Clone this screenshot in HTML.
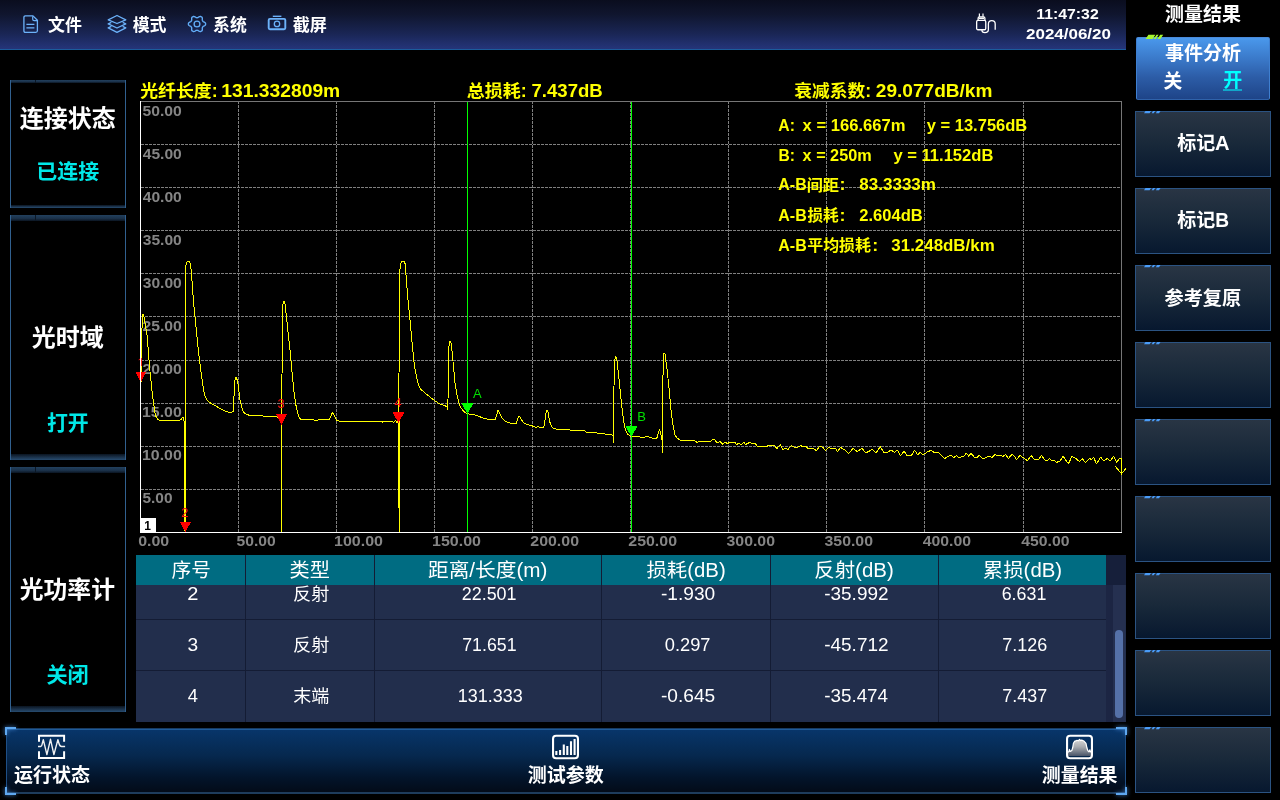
<!DOCTYPE html>
<html lang="zh-CN">
<head>
<meta charset="utf-8">
<title>OTDR</title>
<style>
*{box-sizing:border-box;margin:0;padding:0}
html,body{width:1280px;height:800px;overflow:hidden;background:#000}
body{position:relative;font-family:"Liberation Sans","Noto Sans CJK SC",sans-serif;color:#fff}
svg{overflow:visible}
/* top bar */
#topbar{position:absolute;left:0;top:0;width:1126px;height:50px;background:linear-gradient(180deg,#0a0d1e 0%,#10162f 30%,#1a2656 70%,#25357a 100%);border-bottom:1px solid #1c5c9c}
.ticon{position:absolute}
/* right panel buttons */
.rbtn{position:absolute;left:1135px;width:136px;height:66px;border:1px solid #2b5382;background:linear-gradient(180deg,#293544 0%,#19293a 48%,#07182f 100%)}
.rbtn.on{border-radius:2px;left:1136px;width:134px;background:linear-gradient(180deg,#4a98ec 0%,#3a78c8 35%,#2c5ca6 65%,#1e4488 100%);border-color:#4a8ada #3f7fd0 #2f62aa #3f7fd0}
#ticks{position:absolute;left:0;top:0}
/* left boxes */
.lbox{position:absolute;left:10px;width:116px;border-left:1px solid #31608f;border-right:1px solid #31608f}
.lbox:before,.lbox:after{content:"";position:absolute;left:0;right:0}
.lbox:before{top:0;height:6px;background:linear-gradient(180deg,#22405e,#1a3048 60%,#0a1420)}
.lbox:after{bottom:0;height:6px;background:linear-gradient(180deg,#0a1420,#1a3048 50%,#274c70)}
.lbox.s:before,.lbox.s:after{height:3px}
.lbox u{position:absolute;left:24px;top:0;width:1px;height:6px;background:#0c1826;z-index:2}
.lbox.s u{height:3px}
/* bottom bar */
#bbar{position:absolute;left:6px;top:728px;width:1120px;height:66px;border-left:1px solid #1f4f86;border-right:1px solid #1f4f86;background:linear-gradient(#183b62,#183b62) 0 0/100% 1px no-repeat,linear-gradient(#1f5a98,#1f5a98) 0 1px/100% 1px no-repeat,linear-gradient(#1e3c5c,#1e3c5c) 0 100%/100% 2px no-repeat,linear-gradient(180deg,#08366c 0%,#06284e 42%,#03142a 76%,#030a16 100%)}
.corner{position:absolute;width:11px;height:8px;border:2px solid #5fa8f0;filter:drop-shadow(0 0 2px #4a90e0)}
/* chart */
#chart{position:absolute;left:0;top:0;will-change:transform;font-family:"Liberation Sans","Noto Sans CJK SC",sans-serif}
#chart .mk{font:400 13px "Liberation Sans",sans-serif;fill:#00e000}
#chart .rk{font:400 13px "Liberation Sans",sans-serif;fill:#ff1010}
/* table */
#tbl{position:absolute;left:136px;top:554.5px;width:990px;height:167.3px;background:#222e4c;overflow:hidden}
#tbl .hd{position:absolute;left:0;top:0;width:970px;height:30.5px;background:#006c82}
#tbl .vl{position:absolute;top:0;width:1px;height:168px;background:#141c34}
#tbl .hl{position:absolute;left:0;width:970px;height:1px;background:#141c34}
#tbl .sb1{position:absolute;left:970px;top:0;width:20px;height:30.5px;background:#161f3a}
#tbl .sb2{position:absolute;left:970px;top:30.5px;width:7px;height:137px;background:#1c2543}
#tbl .sb3{position:absolute;left:977px;top:30.5px;width:12px;height:137px;background:#253050}
#tbl .thumb{position:absolute;left:979px;top:75.5px;width:8px;height:88px;border-radius:4px;background:#5571a8}
/* text overlay */
#txt{position:absolute;left:0;top:0;will-change:transform;font-family:"Liberation Sans","Noto Sans CJK SC",sans-serif}

</style>
</head>
<body>
<div id="topbar"><svg class="ticon" style="left:22px;top:14px" width="18" height="20" viewBox="0 0 18 20"><g fill="none" stroke="#6cb2fa" stroke-width="1.3" stroke-linejoin="round"><path d="M3.4 1.9H11L15.4 6.3V16.8Q15.4 18.3 13.9 18.3H3.4Q1.9 18.3 1.9 16.8V3.4Q1.9 1.9 3.4 1.9Z"/><path d="M10.7 2.3V5.2Q10.7 6.6 12.1 6.6H15" stroke-width="1.2"/><path d="M4.4 10.4H12.4M4.4 13.8H12.4"/></g></svg><svg class="ticon" style="left:107px;top:14px" width="20" height="20" viewBox="0 0 20 20"><g fill="none" stroke="#6cb2fa" stroke-width="1.3" stroke-linejoin="round" stroke-linecap="round"><path d="M10 1.5L18.8 5.8L10 9.5L1.2 5.8Z"/><path d="M3.9 8.7L1.2 9.9L10 14L18.8 9.9L16.1 8.7M3.9 12.7L1.2 13.9L10 18.3L18.8 13.9L16.1 12.7"/></g></svg><svg class="ticon" style="left:186px;top:14px" width="22" height="20" viewBox="0 0 22 20"><path d="M19.60 10.00L19.58 9.45L19.41 8.93L18.90 8.48L18.29 8.10L17.67 7.80L17.12 7.54L16.83 7.21L16.63 6.85L16.40 6.50L16.25 6.09L16.30 5.49L16.34 4.82L16.31 4.13L16.16 3.48L15.78 3.06L15.30 2.78L14.80 2.52L14.24 2.40L13.59 2.60L12.95 2.93L12.37 3.30L11.86 3.63L11.43 3.71L11.00 3.70L10.57 3.71L10.14 3.63L9.63 3.30L9.05 2.93L8.41 2.60L7.76 2.40L7.20 2.52L6.70 2.78L6.22 3.06L5.84 3.48L5.69 4.13L5.66 4.82L5.70 5.49L5.75 6.09L5.60 6.50L5.37 6.85L5.17 7.21L4.88 7.54L4.33 7.80L3.71 8.10L3.10 8.48L2.59 8.93L2.42 9.45L2.40 10.00L2.42 10.55L2.59 11.07L3.10 11.52L3.71 11.90L4.33 12.20L4.88 12.46L5.17 12.79L5.37 13.15L5.60 13.50L5.75 13.91L5.70 14.51L5.66 15.18L5.69 15.87L5.84 16.52L6.22 16.94L6.70 17.22L7.20 17.48L7.76 17.60L8.41 17.40L9.05 17.07L9.63 16.70L10.14 16.37L10.57 16.29L11.00 16.30L11.43 16.29L11.86 16.37L12.37 16.70L12.95 17.07L13.59 17.40L14.24 17.60L14.80 17.48L15.30 17.22L15.78 16.94L16.16 16.52L16.31 15.87L16.34 15.18L16.30 14.51L16.25 13.91L16.40 13.50L16.63 13.15L16.83 12.79L17.12 12.46L17.67 12.20L18.29 11.90L18.90 11.52L19.41 11.07L19.58 10.55Z" fill="none" stroke="#62adf8" stroke-width="1.35" stroke-linejoin="round"/><circle cx="11" cy="10" r="2.9" fill="none" stroke="#62adf8" stroke-width="1.3"/></svg><svg class="ticon" style="left:266px;top:14px" width="22" height="18" viewBox="0 0 22 18"><g fill="none" stroke="#6cb2fa"><path d="M6.8 2.3H15.4" stroke-width="1.4"/><rect x="2.7" y="4.9" width="16.6" height="10.4" rx="1.2" stroke-width="1.9"/><circle cx="11" cy="9.9" r="2.7" stroke-width="1.3"/></g></svg><svg class="ticon" style="left:974px;top:12px" width="24" height="23" viewBox="0 0 24 23"><g fill="none" stroke="#fff" stroke-width="1.3"><path d="M5.4 1.6V4.8M9 1.6V4.8" stroke-width="1.2"/><path d="M4.1 8.4V6.2Q4.1 4.9 5.4 4.9H9.6Q10.9 4.9 10.9 6.2V8.4M4.9 6.4H10"/><rect x="2.65" y="8.4" width="9.1" height="9.35" rx="1.3"/><path d="M7.9 17.75V18.2Q7.9 20.6 10.9 20.6Q14.4 20.6 14.4 17.5V12Q14.4 8.6 17.8 8.6Q21.2 8.6 21.2 12V17.75"/></g></svg></div>
<div class="rbtn on" style="top:36.6px;height:63px"></div>
<div class="rbtn" style="top:111px"></div>
<div class="rbtn" style="top:188px"></div>
<div class="rbtn" style="top:265px"></div>
<div class="rbtn" style="top:342px"></div>
<div class="rbtn" style="top:419px"></div>
<div class="rbtn" style="top:496px"></div>
<div class="rbtn" style="top:573px"></div>
<div class="rbtn" style="top:650px"></div>
<div class="rbtn" style="top:727px"></div>
<svg id="ticks" width="1280" height="800" viewBox="0 0 1280 800">
<path d="M1145.6 39.1L1148.4 34.7H1155.4L1152.6 39.1ZM1153.7 39.1L1156.5 34.7H1158.6L1155.8 39.1ZM1157.4 39.1L1160.2 34.7H1163.2L1160.4 39.1Z" fill="#a6f62e"/>
<path d="M1144 113.3 l1.5 -2.4h5.6l-1.5 2.4zm7.6 0l1.5 -2.4h2.1l-1.5 2.4zm4.2 0l1.5 -2.4h3.2l-1.5 2.4z" fill="#4a9cf8"/>
<path d="M1144 190.3 l1.5 -2.4h5.6l-1.5 2.4zm7.6 0l1.5 -2.4h2.1l-1.5 2.4zm4.2 0l1.5 -2.4h3.2l-1.5 2.4z" fill="#4a9cf8"/>
<path d="M1144 267.3 l1.5 -2.4h5.6l-1.5 2.4zm7.6 0l1.5 -2.4h2.1l-1.5 2.4zm4.2 0l1.5 -2.4h3.2l-1.5 2.4z" fill="#4a9cf8"/>
<path d="M1144 344.3 l1.5 -2.4h5.6l-1.5 2.4zm7.6 0l1.5 -2.4h2.1l-1.5 2.4zm4.2 0l1.5 -2.4h3.2l-1.5 2.4z" fill="#4a9cf8"/>
<path d="M1144 421.3 l1.5 -2.4h5.6l-1.5 2.4zm7.6 0l1.5 -2.4h2.1l-1.5 2.4zm4.2 0l1.5 -2.4h3.2l-1.5 2.4z" fill="#4a9cf8"/>
<path d="M1144 498.3 l1.5 -2.4h5.6l-1.5 2.4zm7.6 0l1.5 -2.4h2.1l-1.5 2.4zm4.2 0l1.5 -2.4h3.2l-1.5 2.4z" fill="#4a9cf8"/>
<path d="M1144 575.3 l1.5 -2.4h5.6l-1.5 2.4zm7.6 0l1.5 -2.4h2.1l-1.5 2.4zm4.2 0l1.5 -2.4h3.2l-1.5 2.4z" fill="#4a9cf8"/>
<path d="M1144 652.3 l1.5 -2.4h5.6l-1.5 2.4zm7.6 0l1.5 -2.4h2.1l-1.5 2.4zm4.2 0l1.5 -2.4h3.2l-1.5 2.4z" fill="#4a9cf8"/>
<path d="M1144 729.3 l1.5 -2.4h5.6l-1.5 2.4zm7.6 0l1.5 -2.4h2.1l-1.5 2.4zm4.2 0l1.5 -2.4h3.2l-1.5 2.4z" fill="#4a9cf8"/>
</svg>
<div class="lbox s" style="top:80px;height:128px"><u></u></div><div class="lbox" style="top:215px;height:245px"><u></u></div><div class="lbox" style="top:467px;height:245px"><u></u></div>
<svg id="chart" width="1280" height="800" viewBox="0 0 1280 800">
<path d="M238.5 101V532M336.5 101V532M434.5 101V532M532.5 101V532M630.5 101V532M728.5 101V532M826.5 101V532M924.5 101V532M1023.5 101V532M141 144.5H1121M141 187.5H1121M141 230.5H1121M141 273.5H1121M141 316.5H1121M141 360.5H1121M141 403.5H1121M141 446.5H1121M141 489.5H1121" stroke="#808080" stroke-width="1" stroke-dasharray="3 1" fill="none" shape-rendering="crispEdges"/>
<path d="M140 101.5H1122M1121.5 101V532" stroke="#767676" stroke-width="1" fill="none" shape-rendering="crispEdges"/>
<text x="142.5" y="115.9" textLength="39.3" lengthAdjust="spacingAndGlyphs" font-size="15" font-weight="700" fill="#858585">50.00</text>
<text x="142.75" y="158.9" textLength="39.05" lengthAdjust="spacingAndGlyphs" font-size="15" font-weight="700" fill="#858585">45.00</text>
<text x="142.75" y="201.9" textLength="39.05" lengthAdjust="spacingAndGlyphs" font-size="15" font-weight="700" fill="#858585">40.00</text>
<text x="142.75" y="244.9" textLength="39.05" lengthAdjust="spacingAndGlyphs" font-size="15" font-weight="700" fill="#858585">35.00</text>
<text x="142.75" y="287.9" textLength="39.05" lengthAdjust="spacingAndGlyphs" font-size="15" font-weight="700" fill="#858585">30.00</text>
<text x="142.5" y="330.9" textLength="39.3" lengthAdjust="spacingAndGlyphs" font-size="15" font-weight="700" fill="#858585">25.00</text>
<text x="142.5" y="373.9" textLength="39.3" lengthAdjust="spacingAndGlyphs" font-size="15" font-weight="700" fill="#858585">20.00</text>
<text x="142" y="416.9" textLength="39.8" lengthAdjust="spacingAndGlyphs" font-size="15" font-weight="700" fill="#858585">15.00</text>
<text x="142" y="459.9" textLength="39.8" lengthAdjust="spacingAndGlyphs" font-size="15" font-weight="700" fill="#858585">10.00</text>
<text x="142.5" y="502.9" textLength="30" lengthAdjust="spacingAndGlyphs" font-size="15" font-weight="700" fill="#858585">5.00</text>
<text x="138.2" y="545.6" textLength="31.05" lengthAdjust="spacingAndGlyphs" font-size="15" font-weight="700" fill="#858585">0.00</text>
<text x="236.55" y="545.6" textLength="39.15" lengthAdjust="spacingAndGlyphs" font-size="15" font-weight="700" fill="#858585">50.00</text>
<text x="334.05" y="545.6" textLength="48.95" lengthAdjust="spacingAndGlyphs" font-size="15" font-weight="700" fill="#858585">100.00</text>
<text x="432.05" y="545.6" textLength="48.95" lengthAdjust="spacingAndGlyphs" font-size="15" font-weight="700" fill="#858585">150.00</text>
<text x="530.3" y="545.6" textLength="48.7" lengthAdjust="spacingAndGlyphs" font-size="15" font-weight="700" fill="#858585">200.00</text>
<text x="628.3" y="545.6" textLength="48.7" lengthAdjust="spacingAndGlyphs" font-size="15" font-weight="700" fill="#858585">250.00</text>
<text x="726.55" y="545.6" textLength="48.45" lengthAdjust="spacingAndGlyphs" font-size="15" font-weight="700" fill="#858585">300.00</text>
<text x="824.55" y="545.6" textLength="48.45" lengthAdjust="spacingAndGlyphs" font-size="15" font-weight="700" fill="#858585">350.00</text>
<text x="922.7" y="545.6" textLength="48.3" lengthAdjust="spacingAndGlyphs" font-size="15" font-weight="700" fill="#858585">400.00</text>
<text x="1021.25" y="545.6" textLength="48.25" lengthAdjust="spacingAndGlyphs" font-size="15" font-weight="700" fill="#858585">450.00</text>
<path d="M184 421H186V531H184ZM281 420H282V532H281ZM398 421H400V508H398ZM399 508H400V532H399Z" fill="#ffff00" shape-rendering="crispEdges"/>
<path d="M141.5 382 L141.5 345 L142.2 322 L143 314 L144 316.5 L145.5 326 L147 335 L148.3 350 L149.5 366.5 L152 391 L154.8 412 L156 416.5 L157.4 419 L159 420 L161 420.5 L170 420 L179 420.5 L181 419.5 L182.8 417 L183.5 419 L184 421 L184.6 531 L185.4 531 L185.5 300 L185.7 266 L187 262 L188.5 261.5 L189.8 262 L190.6 264.5 L191.5 275 L192.5 287 L193.3 300 L195.5 322 L197.7 343.8 L199 356 L201 372 L202.5 383 L203.8 391 L205 396 L206.4 399 L209 402 L212 404 L215 405.5 L220 408.5 L225 411 L230 412.5 L233.3 411.5 L234 396 L234.6 383 L235.3 378.5 L236 377.5 L237 379.5 L238 384 L239 392 L240 400 L242 408 L243.75 412.5 L247 414.5 L250 415.5 L260 415.8 L270 416.5 L277.5 417 L280 417.5 L281.5 418.5 L282.4 340 L282.6 306 L283.6 301.5 L284.6 302 L285.4 306 L286 312.5 L288 332 L290 350 L292 372 L293.75 390 L295.5 403 L297.5 412.5 L299 417 L301 420 L310 419.5 L316 420.3 L320 419.6 L329 420 L330.5 417 L332.5 412.5 L334.5 416 L336.5 420 L338.75 421 L350 421 L370 421.3 L382 421.5 L383 422.3 L384 421.3 L392 421.5 L394 422.3 L395.5 420.5 L397 422.5 L398.3 419.5 L399.5 340 L399.6 276 L400.3 264.5 L401.5 262 L403 261.5 L404.5 262 L405.5 265 L406.3 280 L408 300 L410 320 L412 342 L413.75 360 L415.5 372 L417.5 381 L419 386 L421 389.5 L425 393 L430 397 L435 401 L440 404 L444 405.5 L447 406.5 L447.6 410 L448 400 L448.4 370 L449 346 L449.8 341.5 L450.8 342 L451.6 347 L452.5 356 L454 372 L455 382.5 L457 395 L458.75 402.5 L460.5 407 L462.5 410 L465 412.5 L467.5 413.75 L475 415 L480 416.8 L485 418.75 L490 419.3 L495 419.5 L496.5 416 L497.5 411.5 L498.25 410 L499.2 412 L500.5 415.5 L502.5 418.75 L505 421 L507.5 422.5 L512 423.3 L516 423.75 L517.3 420 L518.3 416.8 L519 416 L520 417.3 L521.5 420 L523 421.8 L525 423.75 L529 425 L532.5 426 L536 427.5 L538 426.5 L540 427.5 L543.75 427.5 L544.8 422 L545.8 413.5 L546.6 410.3 L547.4 410.5 L548.2 413 L549 418 L550 422.5 L552 427 L553.75 428.75 L560 429.5 L570 430 L582.5 431 L584 430 L586 432 L590 432 L600 433.5 L610 434.5 L612 435 L613 436 L613.4 442.5 L613.7 400 L614.5 363 L615.3 356.5 L616.2 357 L617 361 L617.8 368 L618.75 376 L620.5 394 L622.5 412.5 L624 423 L625.5 430 L627.5 434 L630 436 L635 436.5 L640 437 L645 437 L647 436.3 L650 437.5 L656 438.75 L657.5 437 L658.5 432 L659.5 430 L660.5 432 L661.3 436 L662 440 L662.4 452.5 L662.7 400 L663.2 361 L664 353 L665 354 L665.8 360 L666.6 366 L667.5 373.5 L669.5 393 L671 410 L673 425 L675 435 L677 438 L680 440 L685 440.8 L690 440.25 L694.4 440.25 L696.9 442.5 L699.4 441.5 L710.6 441.5 L713 439 L715 440 L716.9 442.75 L720 441.5 L722.75 444.4 L725 442.25 L727.5 443.5 L729.4 442.5 L735 442.5 L736.25 444.4 L739.4 443.4 L741.25 444.75 L743.75 442.25 L745.6 444.4 L750 442.25 L751.9 443.5 L755 443.5 L757.5 446.25 L766.9 446.25 L768.75 445.4 L774.4 445.4 L776.9 448.75 L780.25 444.4 L782.5 449.4 L785.6 448.5 L788 449.6 L791.25 445.4 L794.4 447.25 L798 447.25 L800.6 445.4 L801.9 446.25 L805.6 446.25 L808 448.5 L813 448.5 L816.5 450.6 L819.75 446.25 L823 447.5 L825.6 450.6 L829 447.25 L830.6 448.5 L835.6 448.5 L837.5 451.6 L840.6 447.5 L844.4 449.6 L848.5 453.75 L853 448.5 L857.25 451.6 L858.75 450.6 L861.9 448.5 L865.6 452.5 L868 451.9 L871.9 449.4 L876.25 452.75 L880.25 446.5 L883.75 452.5 L887.5 452.25 L891.25 450 L894.4 452.25 L897.25 450 L900.6 455.9 L904 451 L906.9 455.6 L911.25 455.6 L914.6 450.25 L917.75 454.75 L920.25 452.5 L923 454.75 L927.5 451.9 L931.25 450.25 L935 453 L938.75 452.75 L941.9 455.6 L944.4 458.75 L949.4 455.6 L951.25 455.6 L953.75 457.75 L956.5 455.4 L958.75 457.5 L963.75 456.5 L966.25 453 L968.75 456.25 L971 453 L974.4 457.5 L976.9 457.5 L979.4 455.4 L983 458.75 L990 455.9 L991.9 457.5 L995 454.4 L997.5 455.6 L1000.6 455.6 L1003 456.5 L1005.6 454.4 L1008.5 458.5 L1011.9 454.4 L1014.4 456.25 L1016.5 459.75 L1020 455.4 L1023.75 458 L1027.5 460.6 L1031.25 455.6 L1034.4 459.4 L1038.75 459.4 L1041.5 455.4 L1045 460.25 L1047.75 460.25 L1049.4 458.5 L1051.9 460.6 L1054.4 460 L1056.25 462.5 L1060 461 L1063 456.25 L1068.5 463.75 L1071.9 456.25 L1076.25 458.75 L1079.4 461.5 L1082.5 458.75 L1085.6 462.75 L1089.4 458.5 L1091.5 459.4 L1093.5 457.25 L1096.5 463.75 L1100.6 457.25 L1103.75 460.6 L1107.5 458.5 L1110 461.25 L1113.75 456.25 L1116.9 462.5 L1118.75 459.4 L1120.6 458" stroke="#ffff00" stroke-width="1" fill="none" stroke-linejoin="round" shape-rendering="crispEdges"/>
<path d="M1121.5 458V473M1115.2 466.3L1121.5 473.8L1126.2 468" stroke="#ffff00" stroke-width="1" fill="none" shape-rendering="crispEdges"/>
<path d="M467.5 102V532M631.5 102V532" stroke="#00ff00" stroke-width="1" fill="none" shape-rendering="crispEdges"/>
<path d="M461.5 403H473.5L467.5 414ZM625.5 426H637.5L631.5 437Z" fill="#00ff00" shape-rendering="crispEdges"/>
<text x="473" y="398" class="mk">A</text><text x="637.3" y="421.3" class="mk">B</text>
<path d="M135.5 371.5H146L140.7 382.5ZM179.8 522H191L185.4 532ZM276 414H287L281.5 425ZM392.5 412H404.5L398.5 423Z" fill="#ff0000" shape-rendering="crispEdges"/>
<clipPath id="c1"><rect x="130" y="350" width="20" height="15.9"/></clipPath>
<text x="137.4" y="367.3" class="rk" clip-path="url(#c1)">1</text>
<text x="181.3" y="517" class="rk">2</text>
<text x="277.5" y="408" class="rk">3</text>
<text x="394.5" y="406.5" class="rk">4</text>
<rect x="140" y="518" width="16" height="14" fill="#fff"/><text x="144.3" y="530" style="font:700 12px 'Liberation Sans',sans-serif" fill="#000">1</text>
<path d="M140.5 101V533M140 532.5H1122" stroke="#ffffff" stroke-width="1" fill="none" shape-rendering="crispEdges"/>
</svg>
<div id="tbl">
<div class="sb1"></div><div class="sb2"></div><div class="sb3"></div><div class="thumb"></div>
<div class="hd"></div>
<div class="vl" style="left:109px"></div>
<div class="vl" style="left:238px"></div>
<div class="vl" style="left:465px"></div>
<div class="vl" style="left:634px"></div>
<div class="vl" style="left:802px"></div>
<div class="hl" style="top:64.5px"></div>
<div class="hl" style="top:115.5px"></div>
</div>
<div id="bbar"></div><svg style="position:absolute;left:37px;top:734px" width="30" height="26" viewBox="0 0 30 26"><path d="M2 7.7V1.75H27.1V7.7M2 17.2V24.1H27.1V17.2" fill="none" stroke="#fff" stroke-width="2"/><path d="M1 12.5H3.6Q4.8 12.5 5.3 9.5L6.3 5.6L9.9 20.6L13.5 5.3L16.9 20.6L20.9 5.6L22 9.5Q22.8 12.5 24.6 12.5H28.1" fill="none" stroke="#f2f2f2" stroke-width="1.4" stroke-linejoin="round"/></svg><svg style="position:absolute;left:551px;top:734px" width="30" height="26" viewBox="0 0 30 26"><rect x="2.05" y="1.8" width="24.9" height="22.45" rx="3" fill="none" stroke="#fff" stroke-width="2.1"/><path d="M5.35 21V17M9.1 21V16M12.8 21V10.4M16.3 21V12M20 21V7.3M23.6 21V5" stroke="#fff" stroke-width="2.1"/></svg><svg style="position:absolute;left:1065px;top:734px" width="30" height="26" viewBox="0 0 30 26"><defs><linearGradient id="gr" x1="0" y1="0" x2="0" y2="1"><stop offset="0" stop-color="#d8d8d8"/><stop offset=".45" stop-color="#a8abb0"/><stop offset="1" stop-color="#4a5568"/></linearGradient></defs><path d="M3 18.3L4 17.6L4.4 15.4L5.3 17.4L6.8 16.5L7.7 13.8L8.4 9.3L9.8 7.1L11 6.9L12 6.3L13.2 6.8L14.5 5.4L15.6 6.6L16.5 6.1L17.4 6.4L19.2 7.3L21 9.3L21.9 13.8L22.8 16.5L24 17.9L24.9 15.8L25.5 17.9L26.2 17.6V22H3Z" fill="url(#gr)"/><path d="M3 18.3L4 17.6L4.4 15.4L5.3 17.4L6.8 16.5L7.7 13.8L8.4 9.3L9.8 7.1L11 6.9L12 6.3L13.2 6.8L14.5 5.4L15.6 6.6L16.5 6.1L17.4 6.4L19.2 7.3L21 9.3L21.9 13.8L22.8 16.5L24 17.9L24.9 15.8L25.5 17.9L26.2 17.6" fill="none" stroke="#fff" stroke-width="1.2" stroke-linejoin="round"/><rect x="2.05" y="1.8" width="24.9" height="22.45" rx="3" fill="none" stroke="#fff" stroke-width="2.1"/></svg><div class="corner" style="left:5px;top:727px;border-right:0;border-bottom:0"></div><div class="corner" style="left:5px;top:787px;border-right:0;border-top:0"></div><div class="corner" style="left:1116px;top:727px;border-left:0;border-bottom:0"></div><div class="corner" style="left:1116px;top:787px;border-left:0;border-top:0"></div>
<svg id="txt" width="1280" height="800" viewBox="0 0 1280 800">
<text x="48.05" y="31.3" textLength="33.95" lengthAdjust="spacingAndGlyphs" font-size="17" font-weight="700" fill="#ffffff">文件</text>
<text x="132.7" y="31.3" textLength="33.8" lengthAdjust="spacingAndGlyphs" font-size="17" font-weight="700" fill="#ffffff">模式</text>
<text x="213.03" y="31.3" textLength="33.73" lengthAdjust="spacingAndGlyphs" font-size="17" font-weight="700" fill="#ffffff">系统</text>
<text x="292.75" y="31.3" textLength="34.2" lengthAdjust="spacingAndGlyphs" font-size="17" font-weight="700" fill="#ffffff">截屏</text>
<text x="1036.3" y="18.9" textLength="62.4" lengthAdjust="spacingAndGlyphs" font-size="15" font-weight="700" fill="#ffffff">11:47:32</text>
<text x="1026" y="38.8" textLength="84.95" lengthAdjust="spacingAndGlyphs" font-size="15" font-weight="700" fill="#ffffff">2024/06/20</text>
<text x="1165" y="21.2" textLength="76" lengthAdjust="spacingAndGlyphs" font-size="19" font-weight="700" fill="#ffffff">测量结果</text>
<text x="1165" y="60.4" textLength="76" lengthAdjust="spacingAndGlyphs" font-size="19" font-weight="700" fill="#ffffff">事件分析</text>
<text x="1163.5" y="87.6" textLength="18.75" lengthAdjust="spacingAndGlyphs" font-size="19" font-weight="700" fill="#ffffff">关</text>
<text x="1223.25" y="87" textLength="19" lengthAdjust="spacingAndGlyphs" font-size="19" font-weight="700" fill="#00ffff">开</text>
<text x="1177.25" y="150.3" textLength="38" lengthAdjust="spacingAndGlyphs" font-size="19" font-weight="700" fill="#ffffff">标记</text>
<text x="1215" y="150.1" textLength="14.55" lengthAdjust="spacingAndGlyphs" font-size="20.5" font-weight="700" fill="#ffffff">A</text>
<text x="1177.25" y="227.3" textLength="38" lengthAdjust="spacingAndGlyphs" font-size="19" font-weight="700" fill="#ffffff">标记</text>
<text x="1215.25" y="227.1" textLength="13.85" lengthAdjust="spacingAndGlyphs" font-size="20.5" font-weight="700" fill="#ffffff">B</text>
<text x="1164.5" y="304.9" textLength="76.75" lengthAdjust="spacingAndGlyphs" font-size="19" font-weight="700" fill="#ffffff">参考复原</text>
<text x="19.75" y="126.9" textLength="96" lengthAdjust="spacingAndGlyphs" font-size="23.6" font-weight="700" fill="#ffffff">连接状态</text>
<text x="36.3" y="178.5" textLength="62.95" lengthAdjust="spacingAndGlyphs" font-size="20.5" font-weight="700" fill="#00e8e8">已连接</text>
<text x="31.75" y="346" textLength="72" lengthAdjust="spacingAndGlyphs" font-size="23.6" font-weight="700" fill="#ffffff">光时域</text>
<text x="47" y="430.4" textLength="41.75" lengthAdjust="spacingAndGlyphs" font-size="21" font-weight="700" fill="#00e8e8">打开</text>
<text x="19.75" y="598" textLength="95.25" lengthAdjust="spacingAndGlyphs" font-size="23.6" font-weight="700" fill="#ffffff">光功率计</text>
<text x="46.5" y="682.4" textLength="42.25" lengthAdjust="spacingAndGlyphs" font-size="21" font-weight="700" fill="#00e8e8">关闭</text>
<text x="140.25" y="96.6" textLength="77.4" lengthAdjust="spacingAndGlyphs" font-size="17.6" font-weight="700" fill="#ffff00">光纤长度:</text>
<text x="221.35" y="97" textLength="118.9" lengthAdjust="spacingAndGlyphs" font-size="17.6" font-weight="700" fill="#ffff00">131.332809m</text>
<text x="466.8" y="96.6" textLength="59.85" lengthAdjust="spacingAndGlyphs" font-size="17.6" font-weight="700" fill="#ffff00">总损耗:</text>
<text x="531.55" y="97" textLength="71.2" lengthAdjust="spacingAndGlyphs" font-size="17.6" font-weight="700" fill="#ffff00">7.437dB</text>
<text x="794.3" y="96.6" textLength="76.8" lengthAdjust="spacingAndGlyphs" font-size="17.6" font-weight="700" fill="#ffff00">衰减系数:</text>
<text x="875.8" y="97" textLength="116.65" lengthAdjust="spacingAndGlyphs" font-size="17.6" font-weight="700" fill="#ffff00">29.077dB/km</text>
<text x="778.35" y="130.7" textLength="16.65" lengthAdjust="spacingAndGlyphs" font-size="16.6" font-weight="700" fill="#ffff00">A:</text>
<text x="802.6" y="130.7" textLength="102.9" lengthAdjust="spacingAndGlyphs" font-size="16.6" font-weight="700" fill="#ffff00">x = 166.667m</text>
<text x="926.75" y="130.7" textLength="100.5" lengthAdjust="spacingAndGlyphs" font-size="16.6" font-weight="700" fill="#ffff00">y = 13.756dB</text>
<text x="778.5" y="160.5" textLength="16.5" lengthAdjust="spacingAndGlyphs" font-size="16.6" font-weight="700" fill="#ffff00">B:</text>
<text x="802.6" y="160.5" textLength="69.05" lengthAdjust="spacingAndGlyphs" font-size="16.6" font-weight="700" fill="#ffff00">x = 250m</text>
<text x="893.45" y="160.5" textLength="99.95" lengthAdjust="spacingAndGlyphs" font-size="16.6" font-weight="700" fill="#ffff00">y = 11.152dB</text>
<text x="778.3" y="190.3" textLength="28.45" lengthAdjust="spacingAndGlyphs" font-size="16.6" font-weight="700" fill="#ffff00">A-B</text>
<text x="806.75" y="190.6" textLength="32.25" lengthAdjust="spacingAndGlyphs" font-size="15.6" font-weight="700" fill="#ffff00">间距</text>
<text x="839.5" y="190.3" textLength="6" lengthAdjust="spacingAndGlyphs" font-size="16.6" font-weight="700" fill="#ffff00">:</text>
<text x="859.3" y="190.3" textLength="76.7" lengthAdjust="spacingAndGlyphs" font-size="16.6" font-weight="700" fill="#ffff00">83.3333m</text>
<text x="778.3" y="220.5" textLength="28.45" lengthAdjust="spacingAndGlyphs" font-size="16.6" font-weight="700" fill="#ffff00">A-B</text>
<text x="807.5" y="220.8" textLength="31.25" lengthAdjust="spacingAndGlyphs" font-size="15.6" font-weight="700" fill="#ffff00">损耗</text>
<text x="839.5" y="220.5" textLength="6" lengthAdjust="spacingAndGlyphs" font-size="16.6" font-weight="700" fill="#ffff00">:</text>
<text x="859.3" y="220.5" textLength="63.45" lengthAdjust="spacingAndGlyphs" font-size="16.6" font-weight="700" fill="#ffff00">2.604dB</text>
<text x="778.3" y="250.8" textLength="28.45" lengthAdjust="spacingAndGlyphs" font-size="16.6" font-weight="700" fill="#ffff00">A-B</text>
<text x="807.25" y="251.1" textLength="63.75" lengthAdjust="spacingAndGlyphs" font-size="15.6" font-weight="700" fill="#ffff00">平均损耗</text>
<text x="872.25" y="250.8" textLength="6" lengthAdjust="spacingAndGlyphs" font-size="16.6" font-weight="700" fill="#ffff00">:</text>
<text x="891.35" y="250.8" textLength="103.35" lengthAdjust="spacingAndGlyphs" font-size="16.6" font-weight="700" fill="#ffff00">31.248dB/km</text>
<text x="14" y="782.3" textLength="76" lengthAdjust="spacingAndGlyphs" font-size="19" font-weight="700" fill="#ffffff">运行状态</text>
<text x="527.75" y="782.3" textLength="76" lengthAdjust="spacingAndGlyphs" font-size="19" font-weight="700" fill="#ffffff">测试参数</text>
<text x="1041.8" y="782.3" textLength="75.7" lengthAdjust="spacingAndGlyphs" font-size="19" font-weight="700" fill="#ffffff">测量结果</text>
<text x="171.57" y="577.2" textLength="39.35" lengthAdjust="spacingAndGlyphs" font-size="19.3" font-weight="400" fill="#ffffff">序号</text>
<text x="289.55" y="577.2" textLength="40.35" lengthAdjust="spacingAndGlyphs" font-size="19.3" font-weight="400" fill="#ffffff">类型</text>
<text x="428.02" y="577.2" textLength="119.45" lengthAdjust="spacingAndGlyphs" font-size="19.3" font-weight="400" fill="#ffffff">距离/长度(m)</text>
<text x="646.5" y="577.2" textLength="79.2" lengthAdjust="spacingAndGlyphs" font-size="19.3" font-weight="400" fill="#ffffff">损耗(dB)</text>
<text x="814.3" y="577.2" textLength="79.4" lengthAdjust="spacingAndGlyphs" font-size="19.3" font-weight="400" fill="#ffffff">反射(dB)</text>
<text x="982.85" y="577.2" textLength="79.3" lengthAdjust="spacingAndGlyphs" font-size="19.3" font-weight="400" fill="#ffffff">累损(dB)</text>
<text x="187.35" y="600.1" textLength="11.15" lengthAdjust="spacingAndGlyphs" font-size="19" font-weight="400" fill="#ffffff">2</text>
<text x="187.6" y="651.2" textLength="10.65" lengthAdjust="spacingAndGlyphs" font-size="19" font-weight="400" fill="#ffffff">3</text>
<text x="187.85" y="702" textLength="10.15" lengthAdjust="spacingAndGlyphs" font-size="19" font-weight="400" fill="#ffffff">4</text>
<text x="293" y="599.9" textLength="36.3" lengthAdjust="spacingAndGlyphs" font-size="17" font-weight="400" fill="#ffffff">反射</text>
<text x="293" y="651" textLength="36.3" lengthAdjust="spacingAndGlyphs" font-size="17" font-weight="400" fill="#ffffff">反射</text>
<text x="293.25" y="701.8" textLength="36.05" lengthAdjust="spacingAndGlyphs" font-size="17" font-weight="400" fill="#ffffff">末端</text>
<text x="461.75" y="600.1" textLength="54.75" lengthAdjust="spacingAndGlyphs" font-size="19" font-weight="400" fill="#ffffff">22.501</text>
<text x="462.25" y="651.2" textLength="54.25" lengthAdjust="spacingAndGlyphs" font-size="19" font-weight="400" fill="#ffffff">71.651</text>
<text x="457.75" y="702" textLength="65" lengthAdjust="spacingAndGlyphs" font-size="19" font-weight="400" fill="#ffffff">131.333</text>
<text x="661" y="600.1" textLength="54.25" lengthAdjust="spacingAndGlyphs" font-size="19" font-weight="400" fill="#ffffff">-1.930</text>
<text x="664.75" y="651.2" textLength="45.75" lengthAdjust="spacingAndGlyphs" font-size="19" font-weight="400" fill="#ffffff">0.297</text>
<text x="661" y="702" textLength="54.25" lengthAdjust="spacingAndGlyphs" font-size="19" font-weight="400" fill="#ffffff">-0.645</text>
<text x="824.25" y="600.1" textLength="64.25" lengthAdjust="spacingAndGlyphs" font-size="19" font-weight="400" fill="#ffffff">-35.992</text>
<text x="824.25" y="651.2" textLength="64.25" lengthAdjust="spacingAndGlyphs" font-size="19" font-weight="400" fill="#ffffff">-45.712</text>
<text x="824.25" y="702" textLength="63.75" lengthAdjust="spacingAndGlyphs" font-size="19" font-weight="400" fill="#ffffff">-35.474</text>
<text x="1001.7" y="600.1" textLength="44.6" lengthAdjust="spacingAndGlyphs" font-size="19" font-weight="400" fill="#ffffff">6.631</text>
<text x="1002.35" y="651.2" textLength="44.9" lengthAdjust="spacingAndGlyphs" font-size="19" font-weight="400" fill="#ffffff">7.126</text>
<text x="1002.35" y="702" textLength="44.75" lengthAdjust="spacingAndGlyphs" font-size="19" font-weight="400" fill="#ffffff">7.437</text>
<path d="M1223 90H1242" stroke="#00ffff" stroke-width="1"/>
</svg>
</body>
</html>
